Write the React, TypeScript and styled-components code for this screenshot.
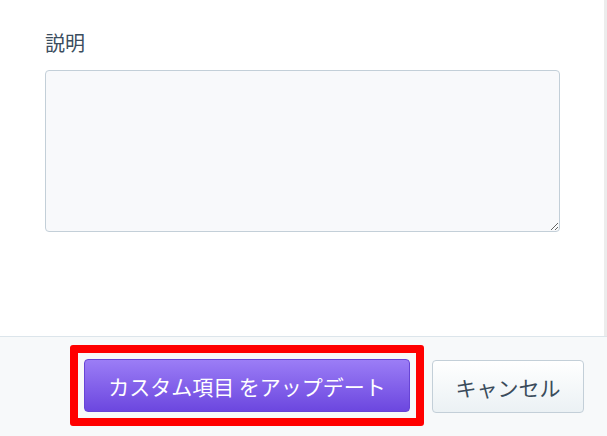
import React from 'react'
import styled, { createGlobalStyle, css } from 'styled-components'

const GlobalStyle = createGlobalStyle`
  html, body {
    margin: 0;
    padding: 0;
    background: #ffffff;
  }
  body {
    font-family: 'Noto Sans CJK JP', 'Noto Sans', sans-serif;
  }
`

const Modal = styled.div`
  display: flex;
  flex-direction: column;
  width: 607px;
  height: 436px;
`

const Body = styled.div`
  flex: 1;
  padding: 29px 0 0 45px;
  border-right: 3px solid #ececec;
`

const Label = styled.label`
  display: block;
  font-size: 20px;
  line-height: 28px;
  color: #3b4d5e;
  margin-bottom: 13px;
`

const TextArea = styled.textarea`
  display: block;
  box-sizing: border-box;
  width: 515px;
  height: 162px;
  border: 1px solid #c3cfd8;
  border-radius: 4px;
  background: #f8f9fb;
  resize: vertical;
  font-family: inherit;
  outline: none;
`

const Footer = styled.div`
  display: flex;
  justify-content: flex-end;
  align-items: flex-start;
  gap: 22px;
  box-sizing: border-box;
  height: 100px;
  padding: 23px 23px 0 0;
  border-top: 1px solid #dce5eb;
  background: #f7f9fa;
`

const Button = styled.button<{ primary?: boolean }>`
  position: relative;
  box-sizing: border-box;
  height: 53px;
  border-radius: 4px;
  font-family: inherit;
  font-size: 21px;
  cursor: pointer;
  ${(props) =>
    props.primary
      ? css`
          width: 326px;
          margin-top: -1px;
          color: #ffffff;
          border: 1px solid #6744d6;
          background: linear-gradient(#9b7df6, #6c47df);

          /* red highlight frame drawn over the screenshot */
          &::after {
            content: '';
            position: absolute;
            top: -15px;
            left: -15px;
            right: -15px;
            bottom: -15px;
            border: 8px solid #ff0000;
            border-radius: 3px;
            pointer-events: none;
          }
        `
      : css`
          width: 152px;
          color: #3a4b5b;
          border: 1px solid #c3cfd8;
          background: linear-gradient(#ffffff, #ebf1f4);
        `}
`

const App = () => {
  return (
    <>
      <GlobalStyle />
      <Modal>
        <Body>
          <Label>説明</Label>
          <TextArea />
        </Body>
        <Footer>
          <Button primary>カスタム項目 をアップデート</Button>
          <Button>キャンセル</Button>
        </Footer>
      </Modal>
    </>
  )
}

export default App
